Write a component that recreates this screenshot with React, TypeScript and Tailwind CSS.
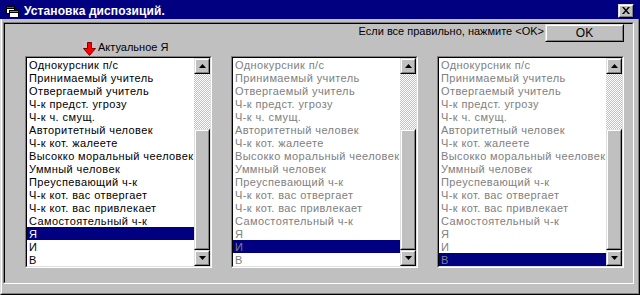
import React from "react";

const items = [
  "Однокурсник п/с",
  "Принимаемый учитель",
  "Отвергаемый учитель",
  "Ч-к предст. угрозу",
  "Ч-к ч. смущ.",
  "Авторитетный человек",
  "Ч-к кот. жалеете",
  "Высокко моральный чееловек",
  "Уммный человек",
  "Преуспевающий ч-к",
  "Ч-к кот. вас отвергает",
  "Ч-к кот. вас привлекает",
  "Самостоятельный ч-к",
  "Я",
  "И",
  "В",
];

function Raised({ className, children }: { className: string; children?: React.ReactNode }) {
  return (
    <div className={`border border-t-[#dfdfdf] border-l-[#dfdfdf] border-r-black border-b-black ${className}`}>
      <div className="w-full h-full border border-t-white border-l-white border-r-[#808080] border-b-[#808080] bg-[#c0c0c0] flex items-center justify-center">
        {children}
      </div>
    </div>
  );
}

function Arrow({ down }: { down?: boolean }) {
  return (
    <svg width="7" height="4" viewBox="0 0 7 4">
      {down ? <polygon points="0,0 7,0 3.5,4" fill="#000" /> : <polygon points="0,4 7,4 3.5,0" fill="#000" />}
    </svg>
  );
}

function ScrollBar() {
  return (
    <div className="w-[16px] h-full flex flex-col">
      <Raised className="h-[16px] w-[16px]">
        <Arrow />
      </Raised>
      <div className="h-[55px] bg-[image:repeating-conic-gradient(#c0c0c0_0%_25%,#ffffff_0%_50%)] bg-[length:2px_2px]" />
      <Raised className="flex-1 w-[16px]" />
      <Raised className="h-[16px] w-[16px]">
        <Arrow down />
      </Raised>
    </div>
  );
}

function ListBox({ selected, disabled }: { selected: number; disabled?: boolean }) {
  return (
    <div className="w-[187px] h-[212px] border border-t-[#808080] border-l-[#808080] border-r-white border-b-white">
      <div className="h-full border border-t-black border-l-black border-r-[#dfdfdf] border-b-[#dfdfdf] bg-white flex">
        <div className="flex-1 flex flex-col overflow-hidden">
          {items.map((it, i) => (
            <div
              key={i}
              className={`h-[13px] leading-[14px] pl-[2px] whitespace-nowrap text-[11px] tracking-[0.4px] ${
                i === selected ? "bg-[#000080]" : ""
              } ${disabled ? "text-[#808080]" : i === selected ? "text-white" : "text-black"}`}
            >
              {it}
            </div>
          ))}
        </div>
        <ScrollBar />
      </div>
    </div>
  );
}

export default function App() {
  return (
    <div className="w-[640px] h-[295px] bg-[#c0c0c0] flex flex-col font-['Liberation_Sans',Arial,sans-serif] text-[11px] text-black">
      {/* Title bar */}
      <div className="h-[19px] bg-[#000080] flex items-center pl-[3px] pr-[6px]">
        <svg width="16" height="16" viewBox="0 0 16 16" className="mt-[2px]">
          <rect x="3.5" y="3.5" width="8" height="7" fill="#fff" stroke="#000" />
          <rect x="3.5" y="3.5" width="8" height="2" fill="#008080" stroke="#000" />
          <rect x="6.5" y="7.5" width="9" height="7" fill="#fff" stroke="#000" />
          <rect x="6.5" y="7.5" width="9" height="2" fill="#808080" stroke="#000" />
        </svg>
        <span className="ml-[5px] mt-[3px] text-white font-bold text-[12px] leading-[14px] tracking-[0.1px]">Установка диспозиций.</span>
        <div className="flex-1" />
        <Raised className="w-[16px] h-[14px] mt-[2px]">
          <svg width="8" height="7" viewBox="0 0 8 7">
            <path d="M0 0h2l2 2.5L6 0h2L5 3.5 8 7H6L4 4.5 2 7H0l3-3.5z" fill="#000" />
          </svg>
        </Raised>
      </div>
      {/* Body */}
      <div className="flex-1 border-l border-r border-b border-l-[#dfdfdf] border-r-black border-b-black">
        <div className="h-full border-l border-r border-b border-l-white border-r-[#808080] border-b-[#808080] pt-[3px] pl-[1px] pr-[4px] pb-[9px]">
          {/* Panel */}
          <div className="h-full border border-t-[#808080] border-l-[#808080] border-r-white border-b-white">
            <div className="h-full border border-t-black border-l-black border-r-[#c0c0c0] border-b-[#c0c0c0] flex flex-col">
              <div className="h-[18px] flex justify-end items-start pr-[8px]">
                <span className="mt-[1px] leading-[13px] mr-[1px] whitespace-nowrap">Если все правильно, нажмите &lt;OK&gt;</span>
                <Raised className="w-[79px] h-[18px]">
                  <span className="leading-[13px] text-[12px]">OK</span>
                </Raised>
              </div>
              <div className="h-[14px] flex items-start pl-[77px]">
                <div className="w-[15px] h-[15px] -mt-px bg-[#c8c2c8] flex items-center justify-center">
                  <svg width="13" height="14" viewBox="0 0 13 14">
                    <path d="M4.5 0.5h4v6h4l-6 7-6-7h4z" fill="#ff0000" stroke="#800000" strokeWidth="1" />
                  </svg>
                </div>
                <span className="-mt-px ml-[1px] leading-[13px]">Актуальное Я</span>
              </div>
              <div className="flex pl-[20px] gap-[19px]">
                <ListBox selected={13} />
                <ListBox selected={14} disabled />
                <ListBox selected={15} disabled />
              </div>
            </div>
          </div>
        </div>
      </div>
    </div>
  );
}
